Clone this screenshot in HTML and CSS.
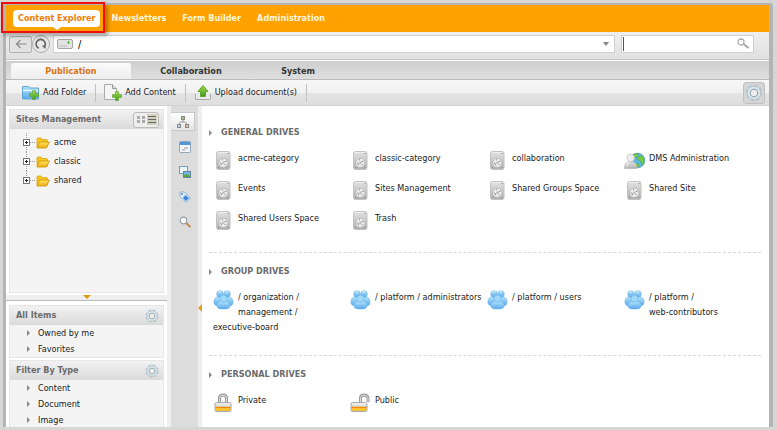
FILE: index.html
```html
<!DOCTYPE html>
<html lang="en">
<head>
<meta charset="utf-8">
<title>Content Explorer</title>
<link rel="stylesheet" href="styles.css">
</head>
<body>
<svg class="sprite" aria-hidden="true">
  <defs>
    <linearGradient id="g-metal" x2="0" y2="1"><stop offset="0" stop-color="#e2e2e2"/><stop offset="1" stop-color="#b0b0b0"/></linearGradient>
    <linearGradient id="g-blue" x2="0" y2="1"><stop offset="0" stop-color="#b2e4fb"/><stop offset="1" stop-color="#5ca8ea"/></linearGradient>
    <linearGradient id="g-gold" x2="0" y2="1"><stop offset="0" stop-color="#ffe45c"/><stop offset="1" stop-color="#f0ae10"/></linearGradient>
    <linearGradient id="g-green" x2="0" y2="1"><stop offset="0" stop-color="#a5dc4f"/><stop offset="1" stop-color="#3f9a1c"/></linearGradient>
    <linearGradient id="g-lock" x2="0" y2="1"><stop offset="0" stop-color="#f2f2f0"/><stop offset="1" stop-color="#bdbdb8"/></linearGradient>
  </defs>
  <symbol id="drive" viewBox="0 0 20 20">
    <rect x="3" y=".5" width="13.500" height="18" rx="2" fill="url(#g-metal)" stroke="#c2c2c2"/>
    <path d="M4.500 1.500h10" stroke="#eee"/>
    <circle cx="14.500" cy="2.500" r=".6" fill="#777"/><circle cx="5" cy="16.500" r=".6" fill="#888"/><circle cx="14.500" cy="16.500" r=".6" fill="#888"/>
    <circle cx="9.800" cy="11.800" r="4.600" fill="#ececec" stroke="#aaa" stroke-width=".6"/>
    <circle cx="9.800" cy="11.800" r="1.200" fill="#bbb"/>
    <path d="M6.800 11.500l1.500 2.500M11 11l2-1M11 14l1-1M8.500 9l1-.5" stroke="#888"/>
  </symbol>
  <symbol id="group" viewBox="0 0 20 20">
    <g fill="url(#g-blue)" stroke="#62aee8" stroke-width=".5">
      <path d="M.7 14c-1-5 1.300-7 4.300-7.500h10c3 .5 5.300 2.500 4.300 7.500-.8 1.600-3 2-4 2H5c-1 0-3.200-.4-4.300-2z"/>
      <circle cx="6.500" cy="4" r="3.300"/><circle cx="13.500" cy="4" r="3.300"/>
      <path d="M3.500 16c-.5-3.500 2.500-5 6.500-5s7 1.500 6.500 5c0 2.500-2.500 3-6.500 3s-6.500-.5-6.500-3z"/>
      <circle cx="10" cy="8.500" r="3.500" fill="#9edaf8"/>
    </g>
    <path d="M5 3c.5-1 1.500-1.300 2.500-1M12 3c.5-1 1.500-1.300 2.500-1" stroke="#def5ff" fill="none"/>
  </symbol>
  <symbol id="admin" viewBox="0 0 22 20">
    <circle cx="14" cy="9.500" r="7.700" fill="#5eb7ea" stroke="#3d8fc4" stroke-width=".7"/>
    <path d="M8 5c2-2.500 4-3 7-2.500l-1 3-3 1-1 3-2-1zM14 7l4-3c3 2 3.500 4.500 3 7l-2 3-1.500-4-3-1zM11 12l4 1 1 2-2 2h-3z" fill="#7ccb3c" stroke="#3b981e" stroke-width=".4"/>
    <path d="M.7 18c-.6-5 1.500-7 6.300-7s6.800 2 6 7z" fill="url(#g-metal)" stroke="#bbb" stroke-width=".7"/>
    <circle cx="7" cy="6.800" r="4" fill="#ededed" stroke="#bbb" stroke-width=".7"/>
    <path d="M3 16c0-3 1-4 3-4" stroke="#fff" fill="none"/>
  </symbol>
  <symbol id="lock" viewBox="0 0 20 20">
    <path d="M6 11V5.500q0-3.500 3.500-3.500T13 5.500V11" fill="none" stroke="#999" stroke-width="3"/>
    <path d="M6 10V5.500q0-3.500 3.500-3.500T13 5.500V10" fill="none" stroke="#dedede"/>
    <rect x="1.500" y="9.500" width="16" height="9" rx="1.500" fill="url(#g-lock)" stroke="#aaa"/>
    <path d="M2 14.500h15" stroke="#f08a00" stroke-width="1.500"/><path d="M2 16.500h15" stroke="#ffc21e" stroke-width="2.500"/>
  </symbol>
  <symbol id="unlock" viewBox="0 0 20 20">
    <path d="M10 10V5q0-3 3.500-3T17.500 5v4" fill="none" stroke="#999" stroke-width="3"/>
    <path d="M10 10V5q0-3 3.500-3T17.500 5v3.500" fill="none" stroke="#dedede"/>
    <rect x=".5" y="9.500" width="16" height="9" rx="1.500" fill="url(#g-lock)" stroke="#aaa"/>
    <path d="M1 14.500h15" stroke="#f08a00" stroke-width="1.500"/><path d="M1 16.500h15" stroke="#ffc21e" stroke-width="2.500"/>
  </symbol>
  <symbol id="folder" viewBox="0 0 14 12">
    <path d="M1 10.500V2q0-1 1-1h3l1.500 1.500h4q1 0 1 1V10" fill="#f8c41f" stroke="#dba314" stroke-width=".8"/>
    <path d="M1 11l2.500-6h10l-3 6z" fill="url(#g-gold)" stroke="#cd9309" stroke-width=".8"/>
  </symbol>
  <symbol id="gear" viewBox="0 0 16 16">
    <circle cx="8" cy="8" r="6.500" fill="none" stroke="#b3c2cc" stroke-width="1.800" stroke-dasharray="3.300 1.800"/>
    <circle cx="8" cy="8" r="4.900" fill="none" stroke="#dbe6ec" stroke-width="3"/>
    <circle cx="8" cy="8" r="6" fill="none" stroke="#a9bbc6" stroke-width=".7"/>
    <circle cx="8" cy="8" r="3.300" fill="#eee" stroke="#8fa2b0" stroke-width="1"/>
  </symbol>
  <symbol id="plus" viewBox="0 0 10 10">
    <path d="M3.500.5h3v3h3v3h-3v3h-3v-3h-3v-3h3z" fill="url(#g-green)" stroke="#5aa52c" stroke-width=".6"/>
  </symbol>
  <symbol id="lens" viewBox="0 0 12 12">
    <path d="M6.800 6.800l4 3.700" stroke="currentColor" stroke-width="2" stroke-linecap="round"/>
    <circle cx="4.500" cy="4.500" r="3.300" fill="#f6fbff" stroke="#9a9fa5" stroke-width="1.200"/>
  </symbol>
</svg>

<div class="frame">
  <nav class="topnav">
    <a class="current" href="#">Content Explorer</a>
    <a href="#">Newsletters</a>
    <a href="#">Form Builder</a>
    <a href="#">Administration</a>
  </nav>

  <div class="address">
    <button class="back" aria-label="Back"><svg width="12" height="10" viewBox="0 0 12 10"><path d="M11.500 5H1.500M5.500 1l-4 4 4 4" fill="none" stroke="#888" stroke-width="1.200"/></svg></button>
    <button class="reload" aria-label="Refresh"><svg width="12" height="12" viewBox="0 0 13 13"><path d="M4 11A5 5 0 1 1 10.500 9" fill="none" stroke="#666" stroke-width="1.800"/><path d="M7.500 8.500l4.500-1-1 4.500z" fill="#666"/></svg></button>
    <div class="path">
      <svg width="16" height="10" viewBox="0 0 16 10"><rect x=".5" y=".5" width="15" height="9" rx="1.500" fill="#e3e3e3" stroke="#a5a5a5"/><path d="M2 7h8" stroke="#bbb"/><path d="M11.500 2v3" stroke="#57ae33" stroke-width="1.500"/></svg>
      <input type="text" value="/" aria-label="Path">
      <button aria-label="Show paths"><svg width="6" height="4" viewBox="0 0 6 4"><path d="M0 0h6L3 4z" fill="#888"/></svg></button>
    </div>
    <div class="search">
      <input type="text" aria-label="Search">
      <button aria-label="Search"><svg width="12" height="12" viewBox="0 0 12 12"><circle cx="4" cy="4" r="3" fill="none" stroke="#aaa" stroke-width="1.300"/><path d="M6.500 6l5 4" stroke="#aaa" stroke-width="2"/></svg></button>
    </div>
  </div>

  <div class="tabs" role="tablist">
    <button role="tab" class="on" aria-selected="true">Publication</button>
    <button role="tab">Collaboration</button>
    <button role="tab">System</button>
  </div>

  <div class="actions">
    <button><svg width="18" height="16" viewBox="0 0 18 16"><path d="M.5 14V1.500h6l1 1.500h9v11z" fill="url(#g-blue)" stroke="#62a7d2"/><path d="M1 5.500h15" stroke="#e3f5ff" stroke-width="1.500"/><use href="#plus" x="7" y="5" width="10" height="10"/></svg>Add Folder</button>
    <button><svg width="18" height="17" viewBox="0 0 18 17"><path d="M.5.5h8l4 4v11H.5z" fill="#f4f4f4" stroke="#aaa"/><path d="M8.500.5v4h4" fill="#ddd" stroke="#999"/><use href="#plus" x="8" y="7" width="10" height="10"/></svg>Add Content</button>
    <button><svg width="18" height="16" viewBox="0 0 18 16"><path d="M1.500 9v5.500h15V9" fill="#e9e9e9" stroke="#aaa"/><path d="M9 .5l5 6h-2.500v5h-5v-5H4z" fill="url(#g-green)" stroke="#5aa52c"/></svg>Upload document(s)</button>
    <button class="settings" aria-label="Preferences"><svg width="18" height="18"><use href="#gear"/></svg></button>
  </div>

  <div class="work">
    <aside class="side">
      <section class="box tree">
        <header><h2>Sites Management</h2>
          <button class="view" aria-label="Change view"><svg width="22" height="11" viewBox="0 0 22 11"><path d="M2 2h3v3H2zM7 2h3v3H7zM2 6h3v3H2zM7 6h3v3H7z" fill="#aaa"/><rect x="12" width="10" height="11" fill="#d0d0bd"/><path d="M13 2.500h8M13 5.500h8M13 8.500h8" stroke="#666"/></svg></button>
        </header>
        <ul>
          <li><svg class="branch" width="12" height="19"><path d="M3.500 0v19M7 9.500h5" stroke="#999" stroke-dasharray="1 1"/><rect x=".5" y="6.500" width="6" height="6" fill="#fff" stroke="#777"/><path d="M2 9.500h3M3.500 8v3" stroke="#222"/></svg><svg width="14" height="12"><use href="#folder"/></svg><a href="#">acme</a></li>
          <li><svg class="branch" width="12" height="19"><path d="M3.500 0v19M7 9.500h5" stroke="#999" stroke-dasharray="1 1"/><rect x=".5" y="6.500" width="6" height="6" fill="#fff" stroke="#777"/><path d="M2 9.500h3M3.500 8v3" stroke="#222"/></svg><svg width="14" height="12"><use href="#folder"/></svg><a href="#">classic</a></li>
          <li><svg class="branch" width="12" height="19"><path d="M3.500 0v9M7 9.500h5" stroke="#999" stroke-dasharray="1 1"/><rect x=".5" y="6.500" width="6" height="6" fill="#fff" stroke="#777"/><path d="M2 9.500h3M3.500 8v3" stroke="#222"/></svg><svg width="14" height="12"><use href="#folder"/></svg><a href="#">shared</a></li>
        </ul>
      </section>
      <div class="splitter"><svg width="8" height="4" viewBox="0 0 8 4"><path d="M0 0h8L4 4z" fill="#d99a0c"/></svg></div>
      <section class="box filter">
        <header><h2>All Items</h2><button aria-label="All items settings"><svg width="14" height="14"><use href="#gear"/></svg></button></header>
        <ul><li><a href="#">Owned by me</a></li><li><a href="#">Favorites</a></li></ul>
      </section>
      <section class="box filter">
        <header><h2>Filter By Type</h2><button aria-label="Filter settings"><svg width="14" height="14"><use href="#gear"/></svg></button></header>
        <ul><li><a href="#">Content</a></li><li><a href="#">Document</a></li><li><a href="#">Image</a></li></ul>
      </section>
    </aside>

    <div class="rail">
      <button class="on" aria-label="Explorer tree"><svg width="12" height="12" viewBox="0 0 12 12"><path d="M6 4v2M2 8l1.500-2h5L10 8" fill="none" stroke="#999"/><rect x="4.500" y=".5" width="3" height="3" fill="#8ccc72" stroke="#888"/><rect x=".5" y="8.500" width="3" height="3" fill="#b8dcf2" stroke="#888"/><rect x="8.500" y="8.500" width="3" height="3" fill="#f1b9a6" stroke="#888"/></svg></button>
      <button aria-label="Clipboard"><svg width="12" height="12" viewBox="0 0 12 12"><rect x=".5" y=".5" width="11" height="11" rx="1" fill="#f1f5f8" stroke="#8ca5bb"/><path d="M1 2.500h10" stroke="#4f96da" stroke-width="3"/><path d="M3 9h3M5 7h4" stroke="#999"/></svg></button>
      <button aria-label="Relations"><svg width="12" height="12" viewBox="0 0 12 12"><rect x=".5" y=".5" width="8" height="7" fill="#eef6fd" stroke="#6f9fce"/><rect x="4.500" y="5.500" width="7" height="6" fill="#74b2e4" stroke="#6685a3"/><path d="M5 11V9l3-1 3 2v1z" fill="#56a63b"/></svg></button>
      <button aria-label="Tags"><svg width="12" height="12" viewBox="0 0 12 12"><path d="M1 1h4.500l6 6-4.500 4.500L1 5.500z" fill="#dcecfb" stroke="#8db4dc"/><path d="M6.500 4l3.500 3.200L6.800 10 4 7z" fill="#3886df"/><circle cx="3" cy="3" r="1" fill="#789"/></svg></button>
      <button class="find" aria-label="Saved searches"><svg width="12" height="12"><use href="#lens"/></svg></button>
      <svg class="handle" width="4" height="8" viewBox="0 0 4 8"><path d="M4 0v8L0 4z" fill="#e0a018"/></svg>
    </div>

    <main class="drives">
      <section>
        <h3>GENERAL DRIVES</h3>
        <div class="list">
          <a href="#"><svg><use href="#drive"/></svg>acme-category</a>
          <a href="#"><svg><use href="#drive"/></svg>classic-category</a>
          <a href="#"><svg><use href="#drive"/></svg>collaboration</a>
          <a href="#"><svg><use href="#admin"/></svg>DMS Administration</a>
          <a href="#"><svg><use href="#drive"/></svg>Events</a>
          <a href="#"><svg><use href="#drive"/></svg>Sites Management</a>
          <a href="#"><svg><use href="#drive"/></svg>Shared Groups Space</a>
          <a href="#"><svg><use href="#drive"/></svg>Shared Site</a>
          <a href="#"><svg><use href="#drive"/></svg>Shared Users Space</a>
          <a href="#"><svg><use href="#drive"/></svg>Trash</a>
        </div>
      </section>
      <section>
        <h3>GROUP DRIVES</h3>
        <div class="list paths">
          <a href="#"><svg><use href="#group"/></svg>/ organization /<br>management /<br>executive-board</a>
          <a href="#"><svg><use href="#group"/></svg>/ platform / administrators</a>
          <a href="#"><svg><use href="#group"/></svg>/ platform / users</a>
          <a href="#"><svg><use href="#group"/></svg>/ platform /<br>web-contributors</a>
        </div>
      </section>
      <section>
        <h3>PERSONAL DRIVES</h3>
        <div class="list">
          <a href="#"><svg><use href="#lock"/></svg>Private</a>
          <a href="#"><svg><use href="#unlock"/></svg>Public</a>
        </div>
      </section>
    </main>
  </div>
</div>
<div class="highlight"></div>
</body>
</html>
```
FILE: styles.css
```css
* { box-sizing: border-box; }
body {
  margin: 0;
  padding: 3px 4px 3px 3px;
  height: 100vh;
  background: #d6d6d6;
  color: #1a1a1a;
  font: 9px/15px "DejaVu Sans Condensed", "DejaVu Sans", sans-serif;
}
.sprite { position: absolute; width: 0; height: 0; }
a { color: inherit; text-decoration: none; }
ul { margin: 0; padding: 0; list-style: none; }
h2, h3 { margin: 0; font-size: 9px; color: #6b6b6b; }
button { border: 0; padding: 0; background: none; font: inherit; color: inherit; display: flex; align-items: center; justify-content: center; }
input { border: 0; padding: 0; background: none; font: inherit; outline: 0; min-width: 0; flex: 1; }

.frame {
  height: 100%;
  display: flex;
  flex-direction: column;
  overflow: hidden;
  background: #fff;
  border: solid #b4b4b4;
  border-width: 2px 4px 0 3px;
  border-radius: 3px 3px 0 0;
}

.topnav { flex: none; height: 27px; padding: 5px 7px; display: flex; gap: 6px; background: #ffa200; font-weight: bold; color: #fff6dc; }
.topnav a { position: relative; height: 17px; padding: 0 5px; line-height: 17px; }
.topnav .current { background: #fff; color: #ef7d0a; border-radius: 4px; }
.topnav .current::after { content: ""; position: absolute; left: 50%; top: 100%; margin-left: -4px; border: 4px solid transparent; border-top: 3px solid #fff; border-bottom: 0; }
.highlight { position: absolute; left: 1px; top: 2px; width: 104px; height: 31px; border: 2px solid #f20c0c; box-shadow: 3px 3px 4px rgba(0, 0, 0, .3); pointer-events: none; }

.address { flex: none; height: 28px; padding: 3px 15px 6px 3px; display: flex; background: linear-gradient(#efefef, #e0e0e0); border-bottom: 1px solid #c4c4c4; }
.back { width: 23px; height: 17px; align-self: center; background: #e2e2e2; border: 1px solid #b0b0b0; border-radius: 2px; }
.reload { width: 18px; height: 18px; align-self: center; background: #e8e8e8; border: 1px solid #aaa; border-radius: 50%; margin-right: 3px; }
.path, .search { display: flex; align-items: center; background: #fff; border: 1px solid #d0d0d0; height: 18px; align-self: center; }
.path { flex: 1; padding: 0 5px 0 3px; gap: 5px; font-size: 11px; }
.search { width: 133px; margin-left: 6px; padding: 0 4px 0 1px; }
.search input { border-left: 1px solid #555; height: 14px; }

.tabs { flex: none; height: 20px; padding: 2px 5px 0; display: flex; background: linear-gradient(#cecece, #dedede); border-top: 1px solid #fff; border-bottom: 1px solid #bababa; }
.tabs button { min-width: 120px; font-weight: bold; color: #333; }
.tabs button + button + button { min-width: 94px; }
.tabs .on { background: linear-gradient(#fafafa, #ededed); color: #d9730d; border-radius: 2px 2px 0 0; }

.actions { flex: none; height: 26px; padding: 0 4px 0 8px; display: flex; align-items: center; background: linear-gradient(#f7f7f7, #f1f1f1 50%, #e3e3e3 55%, #dedede); border-bottom: 1px solid #d2d2d2; }
.actions button { height: 18px; padding: 0 9px 0 8px; gap: 3px; border-right: 1px solid #c2c2c2; }
.actions .settings { margin-left: auto; width: 22px; height: 22px; padding: 0; background: #d5d5d5; border: 1px solid #c0c0c0; border-radius: 3px; }

.work { flex: 1; min-height: 0; display: flex; }
.side { width: 161px; flex: none; padding: 0 3px; display: flex; flex-direction: column; overflow: hidden; }
.box { flex: none; background: #f4f4f4; border: 1px solid #e6e6e6; }
.box header { display: flex; align-items: center; justify-content: space-between; height: 19px; padding: 0 4px 0 6px; background: linear-gradient(#f2f2f2, #dadada); }
.tree { margin-top: 3px; min-height: 184px; }
.tree ul { padding-top: 4px; }
.tree li { display: flex; align-items: center; height: 19px; padding-left: 13px; gap: 1px; }
.tree li a { margin-left: 3px; }
.view { width: 26px; height: 16px; border: 1px solid #bbb; border-radius: 3px; background: #eee; }
.splitter { flex: none; height: 6px; margin: 2px -3px 4px; background: #eee; border-bottom: 1px solid #bbb; display: flex; justify-content: center; align-items: flex-start; }
.filter { margin-bottom: 2px; }
.filter li { display: flex; align-items: center; height: 16px; padding-left: 17px; gap: 8px; }
.filter li::before, h3::before { content: ""; border: solid transparent; border-width: 3px 0 3px 3px; border-left-color: #888; }

.rail { position: relative; flex: none; width: 35px; border: solid #efefef; border-width: 0 4px; background: #dcdcdc; display: flex; flex-direction: column; gap: 6px; padding-top: 6px; }
.rail button { height: 19px; }
.rail .on { background: linear-gradient(#fff, #e5e5e5); border: 1px solid #c8c8c8; border-left: 0; margin-right: 3px; }
.rail .find { color: #c08a4a; }
.handle { position: absolute; right: -4px; top: 198px; }

.drives { flex: 1; min-width: 0; padding: 18px 8px 0 7px; overflow: hidden; }
.drives section { padding-bottom: 11px; }
.drives section + section { border-top: 1px dashed #d8d8d8; padding-top: 10px; }
h3 { display: flex; align-items: center; gap: 9px; height: 17px; }
.list { display: grid; grid-template-columns: repeat(4, 1fr); padding: 10px 0 0 4px; }
.list a { min-height: 30px; }
.paths a { min-height: 54px; }
.list svg { float: left; width: 21px; height: 20px; margin: 0 4px 10px 0; }
```
